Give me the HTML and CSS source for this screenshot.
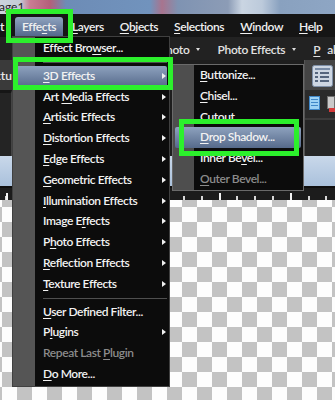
FILE: index.html
```html
<!DOCTYPE html>
<html>
<head>
  <meta charset="UTF-8">
  <title>Effects menu</title>
  <link rel="stylesheet" href="styles.css">
</head>
<body>
  <div class="app">
    <div class="titlebar"><span class="doc-name">age1</span></div>

    <div class="menubar">
      <span class="mb-item mb-cut">t</span>
      <span class="mb-item mb-open">Effe<u>c</u>ts</span>
      <span class="mb-item"><u>L</u>ayers</span>
      <span class="mb-item"><u>O</u>bjects</span>
      <span class="mb-item"><u>S</u>elections</span>
      <span class="mb-item"><u>W</u>indow</span>
      <span class="mb-item"><u>H</u>elp</span>
    </div>

    <div class="toolbar">
      <span class="tb-icon"></span>
      <span class="tb-item tb-photo">Photo <i class="caret"></i></span>
      <span class="tb-item">Photo Effects <i class="caret"></i></span>
      <span class="tb-item"><u>P</u>alettes <i class="caret"></i></span>
    </div>

    <div class="workspace">
      <div class="side-left">
        <div class="sl-label">Textu</div>
        <div class="sl-panel"></div>
      </div>
      <div class="work-mid"></div>
      <div class="side-right">
        <div class="sr-top">
          <svg width="21" height="22" viewBox="0 0 21 22">
            <rect x="0.5" y="0.5" width="20" height="21" rx="2" fill="#cdd6e2" stroke="#7f90a8"/>
            <rect x="3" y="3" width="15" height="2" fill="#7a8ca6"/>
            <g fill="#55657d">
              <rect x="3" y="7" width="3" height="2"/>
              <rect x="8" y="7" width="9" height="2"/>
              <rect x="3" y="11" width="3" height="2"/>
              <rect x="8" y="11" width="9" height="2"/>
              <rect x="3" y="15" width="3" height="2"/>
              <rect x="8" y="15" width="9" height="2"/>
            </g>
          </svg>
        </div>
        <div class="sr-mid">
          <svg width="11" height="14" viewBox="0 0 11 14">
            <rect x="0.5" y="0.5" width="10" height="13" fill="#9dd2f5" stroke="#3f87c8"/>
            <g fill="#3f87c8">
              <rect x="2" y="3" width="7" height="1"/>
              <rect x="2" y="6" width="7" height="1"/>
              <rect x="2" y="9" width="7" height="1"/>
            </g>
          </svg>
          <svg width="8" height="16" viewBox="0 0 8 16">
            <rect x="0.5" y="0.5" width="7" height="12" fill="#c9c9c9" stroke="#6f6f6f"/>
            <rect x="2" y="12" width="6" height="4" fill="#d43a3a"/>
          </svg>
        </div>
        <div class="sr-low"></div>
      </div>
    </div>

    <div class="infobar"></div>
    <div class="ruler"></div>
    <div class="canvas"></div>
  </div>

  <!-- Effects dropdown -->
  <div class="menu main-menu">
    <div class="menu-item">Effect Bro<u>w</u>ser...</div>
    <div class="menu-sep"></div>
    <div class="menu-item has-sub active"><u>3</u>D Effects</div>
    <div class="menu-item has-sub">Art <u>M</u>edia Effects</div>
    <div class="menu-item has-sub"><u>A</u>rtistic Effects</div>
    <div class="menu-item has-sub"><u>D</u>istortion Effects</div>
    <div class="menu-item has-sub"><u>E</u>dge Effects</div>
    <div class="menu-item has-sub"><u>G</u>eometric Effects</div>
    <div class="menu-item has-sub"><u>I</u>llumination Effects</div>
    <div class="menu-item has-sub">Image E<u>f</u>fects</div>
    <div class="menu-item has-sub">P<u>h</u>oto Effects</div>
    <div class="menu-item has-sub"><u>R</u>eflection Effects</div>
    <div class="menu-item has-sub"><u>T</u>exture Effects</div>
    <div class="menu-sep"></div>
    <div class="menu-item"><u>U</u>ser Defined Filter...</div>
    <div class="menu-item has-sub">P<u>l</u>ugins</div>
    <div class="menu-item off">Repeat Last <u>P</u>lugin</div>
    <div class="menu-item"><u>D</u>o More...</div>
  </div>

  <!-- 3D Effects submenu -->
  <div class="menu sub-menu">
    <div class="menu-item"><u>B</u>uttonize...</div>
    <div class="menu-item"><u>C</u>hisel...</div>
    <div class="menu-item"><u>C</u>utout</div>
    <div class="menu-item active"><u>D</u>rop Shadow...</div>
    <div class="menu-item">Inner Be<u>v</u>el...</div>
    <div class="menu-item off"><u>O</u>uter Bevel...</div>
  </div>

  <!-- green highlight boxes -->
  <div class="mark mark-effects"></div>
  <div class="mark mark-3d"></div>
  <div class="mark mark-drop"></div>
</body>
</html>
```

FILE: styles.css
```css
* {
  box-sizing: border-box;
}

body {
  margin: 0;
  width: 335px;
  height: 400px;
  overflow: hidden;
  position: relative;
  background: #1b1b1b;
  font-family: Lato, "Liberation Sans", sans-serif;
  font-size: 12px;
  color: #eeeeee;
}

u {
  text-decoration: underline;
  text-decoration-thickness: 1px;
  text-underline-offset: 2px;
}

.app {
  height: 400px;
  display: flex;
  flex-direction: column;
}

/* Title strip (blurred document tabs) */
.titlebar {
  height: 14px;
  flex: none;
  background: linear-gradient(to right, #cdd3dc 0, #c4ccd7 20px, #c97c93 30px, #b45f7a 50px, #6d8cb6 66px, #7193bd 150px, #a8748e 162px, #7f93b2 178px, #8c9cb6 228px, #cad5e2 242px, #bccadb 262px, #89a1bf 280px, #8ea6c4 335px);
}

.doc-name {
  display: block;
  margin-left: -1px;
  color: #1d1d1d;
  font-size: 12px;
  line-height: 14px;
}

/* Menu bar */
.menubar {
  height: 23px;
  flex: none;
  display: flex;
  align-items: flex-end;
  gap: 2px;
  background: #151515;
}

.mb-item {
  height: 20px;
  padding: 0 7px;
  line-height: 19px;
  color: #f0f0f0;
  font-weight: 600;
  letter-spacing: -0.4px;
  white-space: nowrap;
}

.mb-cut {
  padding: 0 9px 0 0;
}

.mb-open {
  background: linear-gradient(#8fa3bf, #51658a);
  border-radius: 3px 3px 0 0;
}

/* Toolbar */
.toolbar {
  height: 23px;
  flex: none;
  display: flex;
  align-items: center;
  padding: 2px 0 0 9px;
  background: #222222;
  white-space: nowrap;
}

.tb-icon {
  width: 5px;
  height: 9px;
  border-top: 2px solid #cfcfcf;
  border-bottom: 2px solid #cfcfcf;
  background: linear-gradient(#cfcfcf, #cfcfcf) 0 50% / 100% 1px no-repeat;
}

.tb-item {
  display: flex;
  align-items: center;
  gap: 7px;
  margin-right: 17px;
  color: #e2e2e2;
  font-weight: 600;
  letter-spacing: -0.3px;
}

.tb-photo {
  margin-left: 150px;
}

.caret {
  width: 0;
  height: 0;
  border-left: 2.5px solid transparent;
  border-right: 2.5px solid transparent;
  border-top: 3px solid #dddddd;
}

/* Work area behind the menus */
.workspace {
  height: 96px;
  flex: none;
  display: flex;
}

.side-left {
  width: 12px;
  display: flex;
  flex-direction: column;
}

.sl-label {
  height: 30px;
  display: flex;
  justify-content: flex-end;
  align-items: center;
  overflow: hidden;
  white-space: nowrap;
  background: #3a3a3a;
  color: #e8e8e8;
  font-weight: 600;
}

.sl-panel {
  flex: 1;
  background: #242424;
  border-top: 3px solid #161616;
  border-right: 1px solid #444444;
}

.work-mid {
  flex: 1;
  background: #1e1e1e;
}

.side-right {
  width: 31px;
  display: flex;
  flex-direction: column;
  background: #2b2b2b;
  border-left: 1px solid #555555;
}

.sr-top {
  height: 30px;
  padding: 5px 0 0 7px;
  background: #444444;
}

.sr-mid {
  height: 28px;
  display: flex;
  gap: 7px;
  padding: 6px 0 0 4px;
}

.sr-low {
  flex: 1;
  border-top: 2px solid #3c3c3c;
  background: #262626;
}

.infobar {
  height: 30px;
  flex: none;
  background: linear-gradient(#c9d8ea, #aac1dc);
}

.ruler {
  height: 14px;
  flex: none;
  border-top: 2px solid #0f0f0f;
  background-color: #1c1c1c;
  background-image:
    repeating-linear-gradient(to right, #f4f4f4 0 2px, transparent 2px 71px),
    repeating-linear-gradient(to right, #d8d8d8 0 2px, transparent 2px 17.8px);
  background-size: 100% 7px, 100% 4px;
  background-position: 6px 100%, 5px 100%;
  background-repeat: no-repeat;
}

.canvas {
  flex: 1;
  background: repeating-conic-gradient(#c3c3c3 0 25%, #fdfdfd 0 50%) 2px 7px / 30px 30px;
}

/* Dropdown menus */
.menu {
  position: absolute;
  border: 1px solid #404040;
}

.main-menu {
  left: 12px;
  top: 36px;
  width: 158px;
  padding: 1px 2px;
  background: linear-gradient(to right, #555555 0 22px, #0c0c0c 22px);
}

.sub-menu {
  left: 172px;
  top: 64px;
  width: 132px;
  padding: 0 2px;
  border-color: #6a6a6a;
  background: linear-gradient(to right, #4e4e4e 0 21px, #0c0c0c 21px);
}

.menu-item {
  position: relative;
  height: 20.8px;
  line-height: 20.8px;
  padding-left: 28px;
  color: #f2f2f2;
  font-weight: 600;
  letter-spacing: -0.4px;
  white-space: nowrap;
}

.sub-menu .menu-item {
  padding-left: 25px;
}

.menu-item.active {
  background: linear-gradient(#8ea2be, #566a8b);
  border-radius: 2px;
}

.menu-item.off {
  color: #8b8b8b;
}

.has-sub::after {
  content: "";
  position: absolute;
  right: 1px;
  top: 7px;
  border-left: 4px solid #f0f0f0;
  border-top: 3.5px solid transparent;
  border-bottom: 3.5px solid transparent;
}

.menu-sep {
  height: 7px;
  margin-left: 28px;
  background: linear-gradient(#4f4f4f, #4f4f4f) 0 50% / 100% 1px no-repeat;
}

/* Green callout boxes */
.mark {
  position: absolute;
  border: 5px solid #2cf02c;
}

.mark-effects {
  left: 6px;
  top: 9px;
  width: 67px;
  height: 34px;
}

.mark-3d {
  left: 13px;
  top: 57px;
  width: 160px;
  height: 33px;
}

.mark-drop {
  left: 179px;
  top: 119px;
  width: 120px;
  height: 37px;
}
```
